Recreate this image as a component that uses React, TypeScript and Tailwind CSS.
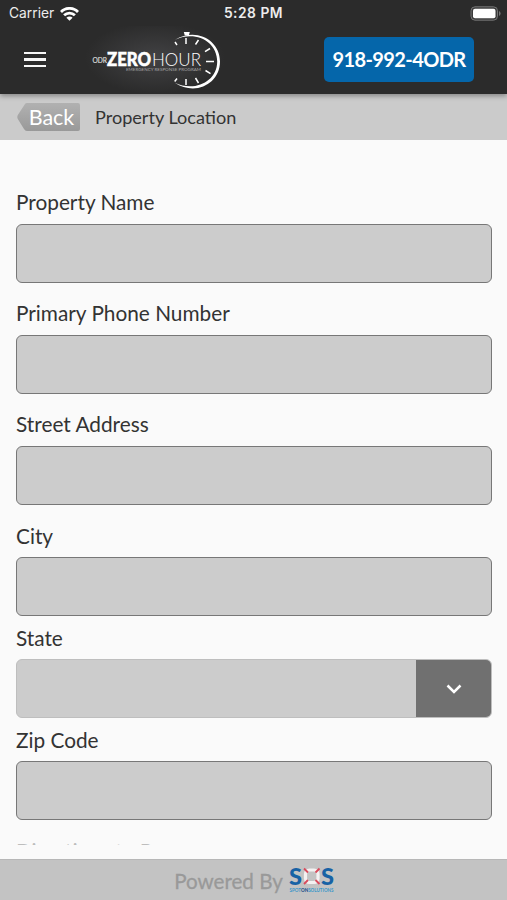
import React from "react";

function StatusBar() {
  return (
    <div className="grid h-[26px] grid-cols-3 items-center leading-none text-[#ededed]">
      <div className="flex items-center gap-[6px] pl-[9px] pt-px font-['Inter',sans-serif] text-[13.8px]">
        <span>Carrier</span>
        <svg width="19" height="14" viewBox="0 0 19 14" fill="none" stroke="#fff" strokeWidth="2.8">
          <path d="M1 4.900a12 12 0 0 1 17 0" />
          <path d="M4.100 8.300a7.700 7.700 0 0 1 10.800 0" />
          <path d="M9.500 13.700 6.400 10.700a4.400 4.400 0 0 1 6.200 0Z" fill="#fff" stroke="none" />
        </svg>
      </div>
      <div className="pt-px text-center font-['Inter',sans-serif] text-[13.8px] font-semibold tracking-[0.5px]">5:28 PM</div>
      <div className="flex justify-end pr-[6px]">
        <svg width="31" height="15" viewBox="0 0 31 15">
          <rect x="1" y="0.8" width="26.500" height="13.400" rx="4" fill="#3c3c3c" stroke="#757575" />
          <rect x="3" y="2.800" width="22.500" height="9.400" rx="2" fill="#fff" />
          <path d="M29 5v5q1.600-.8 1.600-2.500T29 5Z" fill="#757575" />
        </svg>
      </div>
    </div>
  );
}

function ZeroHourLogo() {
  return (
    <svg width="140" height="67" viewBox="85 26 140 67" className="block">
      <defs>
        <radialGradient id="glow">
          <stop offset="0" stopColor="#424244" />
          <stop offset="1" stopColor="#2b2b2b" />
        </radialGradient>
      </defs>
      <ellipse cx="155" cy="58" rx="70" ry="36" fill="url(#glow)" />
      <g fill="#fff" fontFamily="Lato, sans-serif">
        <text x="92.500" y="62.500" fontSize="8" textLength="14.5" lengthAdjust="spacingAndGlyphs" fill="#ddd" stroke="#ddd" strokeWidth="0.200">ODR</text>
        <text x="107" y="65.800" fontSize="18.500" fontWeight="900" textLength="44" lengthAdjust="spacingAndGlyphs" stroke="#fff" strokeWidth="0.500">ZERO</text>
        <text x="152" y="65.800" fontSize="18.500" fontWeight="300" textLength="49" lengthAdjust="spacingAndGlyphs">HOUR</text>
        <text x="126" y="70.800" fontSize="4.300" textLength="75" lengthAdjust="spacingAndGlyphs" fill="#a5a5a5">EMERGENCY RESPONSE PROGRAM</text>
      </g>
      <path d="M175 39.800C196 27 220 40 220 61.500C220 84 195 96.500 174.500 82.500C194 92.500 217.200 82 217.200 61.500C217.200 42 196 30 175 39.800Z" fill="#fff" />
      <path d="M183.800 32h6l-1 3.500h-4Z" fill="#fff" />
      <g stroke="#fff" strokeWidth="1.500">
        <path d="M186 38v6M198.500 40l-3 4.500M210 48.500l-5 3.200M206 61.500h8M205.500 70.500l5 3.200M195.500 78l3 5M186 79v6M177 78.500l-2.300 3M177 45l-2-3" />
      </g>
    </svg>
  );
}

function Header() {
  return (
    <header className="relative z-10 h-[94px] bg-[#2b2b2b] shadow-[0_2px_5px_rgba(0,0,0,0.35)]">
      <StatusBar />
      <div className="flex h-[67px] items-center">
        <button aria-label="Menu" className="ml-6 flex w-[22px] flex-col gap-[4px]">
          <span className="h-[2.5px] w-full bg-[#f7f7f7]" />
          <span className="h-[2.5px] w-full bg-[#f7f7f7]" />
          <span className="h-[2.5px] w-full bg-[#f7f7f7]" />
        </button>
        <div className="ml-[39px]"><ZeroHourLogo /></div>
        <button className="ml-[99px] h-[45px] w-[150px] rounded-[5px] bg-[#0566aa] pb-px text-center text-[20px] font-bold tracking-[-0.6px] text-white">
          <span className="whitespace-nowrap">918-992-4ODR</span>
        </button>
      </div>
    </header>
  );
}

function TitleBar() {
  return (
    <div className="flex h-[46px] items-center bg-[#cbcbcb] pl-[17px]">
      <button className="relative h-[28px] w-[63px]">
        <svg className="absolute inset-0" width="63" height="28" viewBox="0 0 63 28">
          <defs>
            <linearGradient id="back" x1="0" y1="0" x2="0" y2="1">
              <stop offset="0" stopColor="#b1b1b1" />
              <stop offset="1" stopColor="#999" />
            </linearGradient>
          </defs>
          <path d="M8 1Q8.500 0 10 0H61q2 0 2 2V26q0 2-2 2H10Q8 28 7 26L.8 16q-1-2 0-4Z" fill="url(#back)" />
        </svg>
        <span className="relative block pl-[6px] text-[21.5px] leading-[28px] text-white">Back</span>
      </button>
      <h1 className="ml-[15px] pt-px text-[18.1px] leading-none text-[#333]">Property Location</h1>
    </div>
  );
}

const label = "block h-[26px] whitespace-nowrap pl-[0.5px] text-[20.8px] leading-[26px] text-[#333]";

function Field({ name }: { name: string }) {
  return (
    <label className="block">
      <span className={label}>{name}</span>
      <input className="mt-[8.5px] block h-[59px] w-full rounded-[6px] border-[1.5px] border-[#777] bg-[#ccc]" />
    </label>
  );
}

export default function App() {
  return (
    <div className="flex h-[900px] w-[507px] flex-col overflow-hidden bg-[#fafafa] font-['Lato',sans-serif]">
      <Header />
      <TitleBar />
      <main className="h-[705px] overflow-hidden px-[15.5px] pt-[49px]">
        <div className="flex flex-col gap-[17.700px]">
          <Field name="Property Name" />
          <Field name="Primary Phone Number" />
          <Field name="Street Address" />
          <Field name="City" />
        </div>
        <div className="mt-[9px]">
          <span className={label}>State</span>
          <div className="mt-[8px] flex h-[59px] overflow-hidden rounded-[6px] border border-[#bebebe] bg-[#ccc]">
            <div className="flex-1" />
            <button aria-label="Choose state" className="-my-px -mr-px flex w-[76px] items-center justify-center bg-[#707070]">
              <svg width="16" height="10" viewBox="0 0 16 10" fill="none" stroke="#fff" strokeWidth="2.500">
                <path d="m1.500 1.500 6.500 6.500 6.500-6.500" />
              </svg>
            </button>
          </div>
        </div>
        <div className="mt-[8.8px]"><Field name="Zip Code" /></div>
        <div className="mt-[17.500px] opacity-30"><span className={label}>Directions to P</span></div>
      </main>
      <div className="h-[14px]" />
      <footer className="flex flex-1 items-center justify-center gap-[6px] border-t border-[#b7b7b7] bg-[#c3c3c3] pl-px">
        <span className="pt-[2px] text-[20.600px] leading-none text-[#999] [-webkit-text-stroke:0.3px_#999]">Powered By</span>
        <svg width="45" height="28" viewBox="0 0 45 28">
          <g fontFamily="Lato, sans-serif" fontWeight="900" fill="#1762a5">
            <text x="0" y="18.500" fontSize="22" textLength="13" lengthAdjust="spacingAndGlyphs">S</text>
            <text x="32" y="18.500" fontSize="22" textLength="13" lengthAdjust="spacingAndGlyphs">S</text>
            <text x="0.500" y="26" fontSize="5" fontWeight="700" textLength="44" lengthAdjust="spacingAndGlyphs" fill="#3d97c9">SPOT<tspan fill="#174b88" fontWeight="900">ON</tspan>SOLUTIONS</text>
          </g>
          <rect x="16.500" y="4" width="12.500" height="12.500" rx="4" fill="none" stroke="#f4f1f1" strokeWidth="3.200" />
          <path d="m15 2.500 4 4m11.500-4-4 4M15 18l4-4m11.500 4-4-4" stroke="#d94a5b" strokeWidth="1.800" />
        </svg>
      </footer>
    </div>
  );
}
